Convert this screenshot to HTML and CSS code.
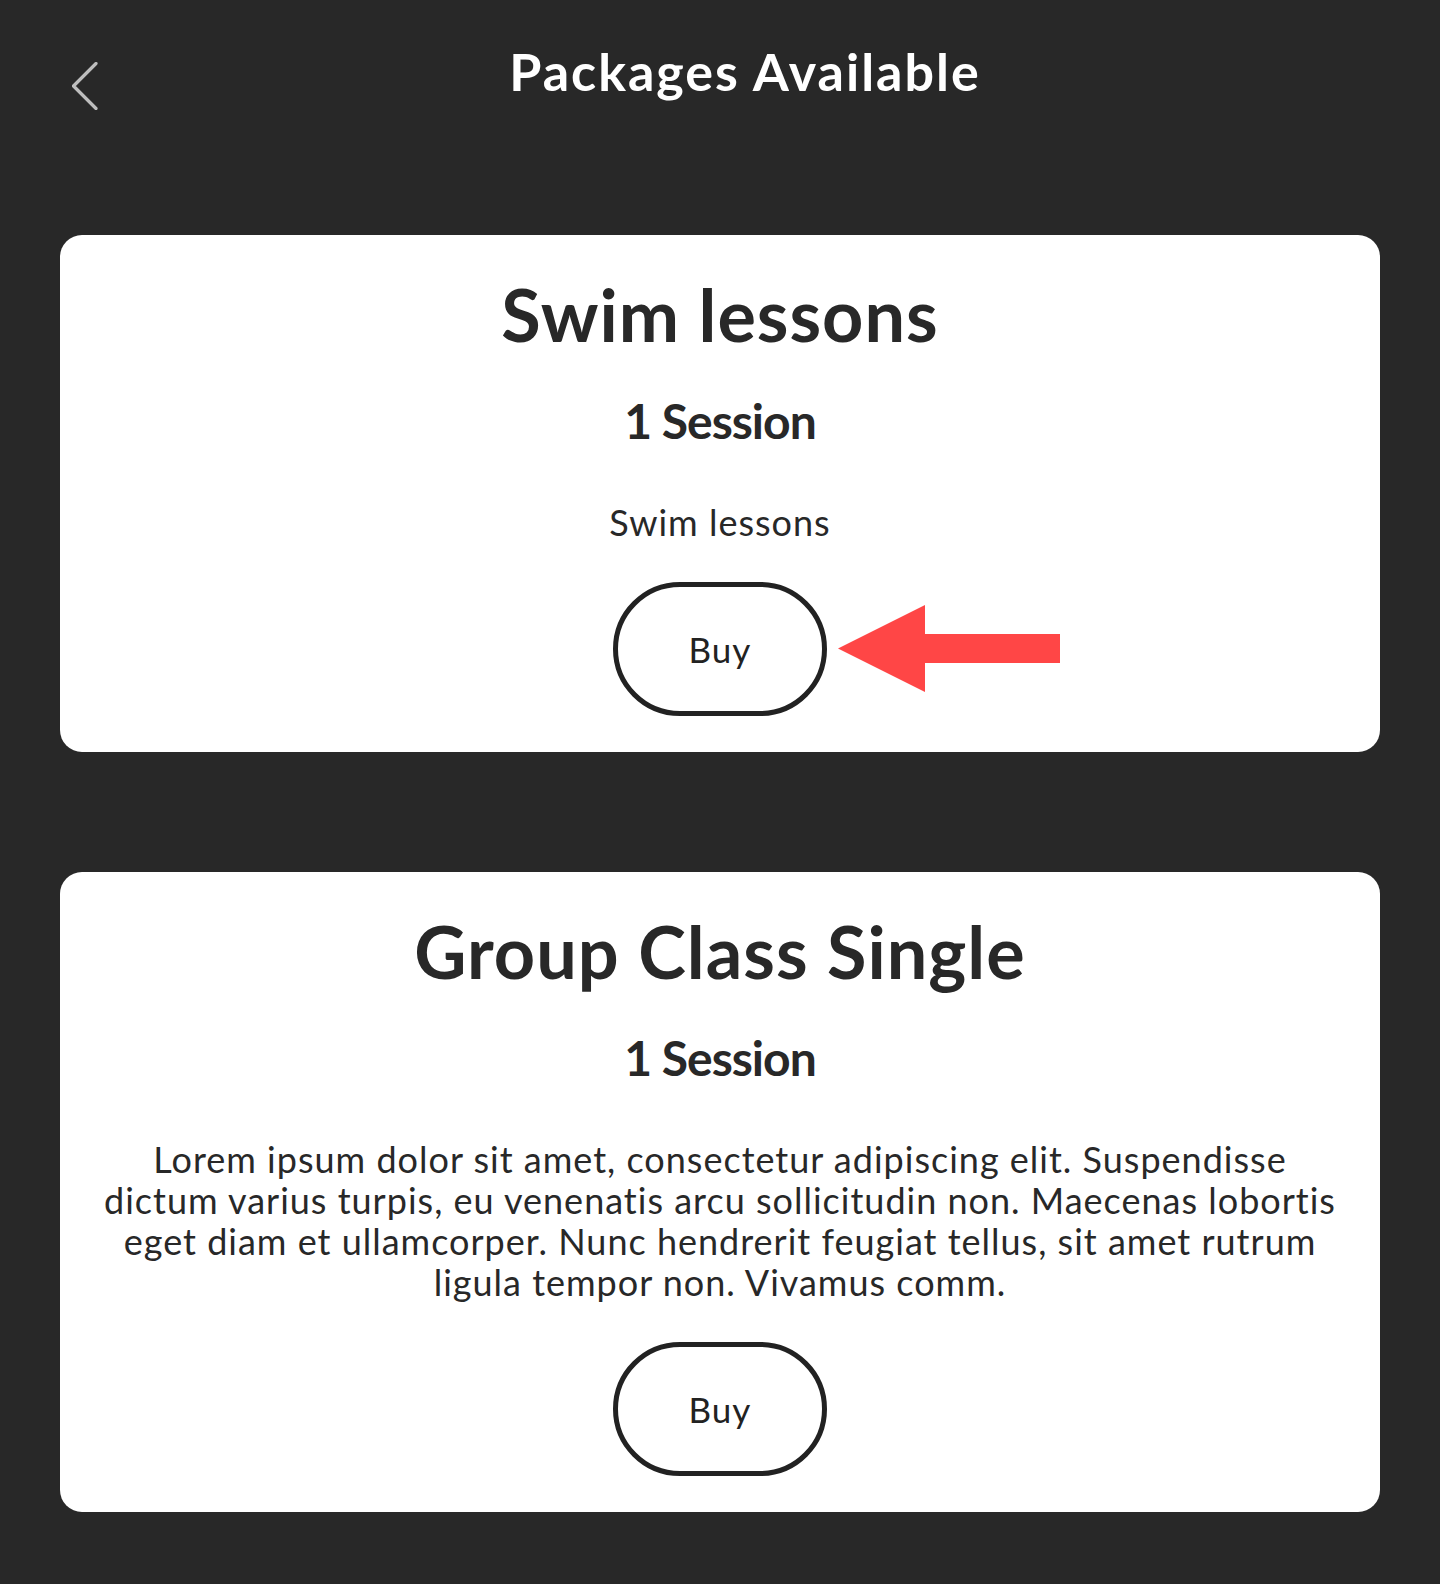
FILE: index.html
```html
<!DOCTYPE html>
<html lang="en">
<head>
    <meta charset="UTF-8">
    <meta name="viewport" content="width=device-width, initial-scale=1.0">
    <title>Packages Available</title>
    <link rel="stylesheet" href="styles.css">
</head>
<body>
    <div class="header">
        <button type="button" class="back-button" aria-label="Back">
            <svg width="26" height="48" viewBox="0 0 26 48">
                <polyline points="24,1.5 1.5,24 24,46.5" fill="none" stroke="#bdbdbd" stroke-width="3.2" stroke-linecap="round" stroke-linejoin="round"/>
            </svg>
        </button>
        <h1 class="page-title">Packages Available</h1>
    </div>

    <div class="packages">
        <div class="package-card">
            <h2 class="package-name">Swim lessons</h2>
            <div class="package-sessions">1 Session</div>
            <p class="package-desc">Swim lessons</p>
            <button type="button" class="buy-button">Buy</button>
            <!-- annotation arrow pointing at the button -->
            <svg class="pointer-arrow" width="222" height="87" viewBox="0 0 222 87">
                <polygon points="0,43.5 87,0 87,29 222,29 222,58 87,58 87,87" fill="#ff4646"/>
            </svg>
        </div>

        <div class="package-card">
            <h2 class="package-name">Group Class Single</h2>
            <div class="package-sessions">1 Session</div>
            <p class="package-desc">Lorem ipsum dolor sit amet, consectetur adipiscing elit. Suspendisse dictum varius turpis, eu venenatis arcu sollicitudin non. Maecenas lobortis eget diam et ullamcorper. Nunc hendrerit feugiat tellus, sit amet rutrum ligula tempor non. Vivamus comm.</p>
            <button type="button" class="buy-button">Buy</button>
        </div>
    </div>
</body>
</html>
```

FILE: styles.css
```css
body {
    font-family: Lato, "Open Sans", Arial, sans-serif;
    margin: 0;
    padding: 0;
    background-color: #282828;
    color: #282828;
}
.header {
    display: flex;
    align-items: flex-start;
    height: 60px;
    padding: 41px 60px 0;
}
.back-button {
    background: none;
    border: none;
    padding: 0 12px;
    margin-top: 21px;
    width: 50px;
    cursor: pointer;
    display: flex;
}
.page-title {
    flex: 1;
    margin: 0;
    text-align: center;
    color: #fff;
    font-size: 52px;
    line-height: 60px;
    font-weight: 700;
    letter-spacing: 2px;
}
.packages {
    display: flex;
    flex-direction: column;
    gap: 120px;
    margin: 134px 60px 0;
    padding-bottom: 70px;
}
.package-card {
    position: relative;
    background-color: #fff;
    border-radius: 22px;
    padding: 36px 40px;
    display: flex;
    flex-direction: column;
    align-items: center;
    text-align: center;
}
.package-name {
    margin: 0;
    font-size: 72px;
    line-height: 86px;
    font-weight: 700;
    letter-spacing: 1px;
}
.package-sessions {
    margin-top: 35px;
    font-size: 48px;
    line-height: 58px;
    font-weight: 700;
    letter-spacing: -1px;
}
.package-desc {
    margin: 52px 0 0;
    font-size: 36px;
    line-height: 41px;
    letter-spacing: 1px;
}
.buy-button {
    margin-top: 39px;
    width: 214px;
    height: 134px;
    border: 5px solid #222;
    border-radius: 67px;
    background-color: #fff;
    color: #222;
    font-family: inherit;
    font-size: 35px;
    letter-spacing: 1px;
    cursor: pointer;
}
.pointer-arrow {
    position: absolute;
    left: calc(50% + 118px);
    top: 370px;
}
```
